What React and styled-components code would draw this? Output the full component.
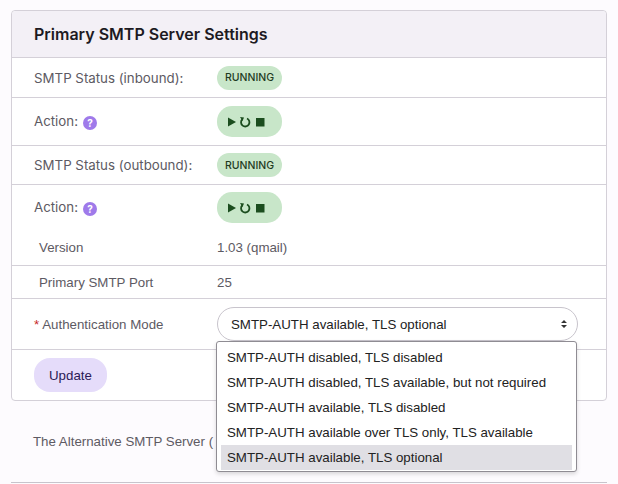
import React from "react";
import styled, { createGlobalStyle } from "styled-components";

const Global = createGlobalStyle`
  body { margin: 0; background: #fdfbfe; font-family: Inter, "Liberation Sans", sans-serif; }
`;
const Page = styled.div`padding: 10px 11px 0 11px; position: relative; height: 484px; box-sizing: border-box; overflow: hidden;`;
const Card = styled.div`border: 1px solid #d4d0d8; border-radius: 4px; background: #fff;`;
const Header = styled.div`background: #f3f0f6; height: 46px; display: flex; align-items: center; padding-left: 22px;
  font-size: 16px; font-weight: 600; color: #1d1a22; border-bottom: 1px solid #d4d0d8; border-radius: 4px 4px 0 0;`;
const Row = styled.div`display: grid; grid-template-columns: ${p => p.$lab || "183px"} 1fr; align-items: center;
  height: ${p => p.$h}px; padding-left: ${p => p.$pl || 22}px; border-bottom: ${p => p.$nb ? "none" : "1px solid #d4d0d8"};
  font-size: 13.3px; color: #5d5a63; font-family: ${p => p.$arial ? '"Liberation Sans", Arial, sans-serif' : 'Inter, sans-serif'};`;
const Badge = styled.span`display: inline-flex; align-items: center; justify-content: center; background: #c8e6c9; color: #1f3b1f;
  border-radius: 12px; height: 24px; padding: 0 8px; font-size: 10.5px; font-weight: 500; width: fit-content;`;
const Actions = styled.span`display: inline-flex; align-items: center; background: #c8e6c9; border-radius: 15px; height: 31px; padding: 0 9px 0 10px; width: fit-content;`;
const Help = styled.span`display: inline-flex; align-items: center; justify-content: center; width: 14px; height: 14px; border-radius: 50%;
  background: #9f7aea; color: #fff; font-size: 10px; font-weight: 700; margin-left: 5px; vertical-align: -1px;`;
const Star = styled.span`color: #c62828; margin-right: 3px;`;
const Select = styled.div`height: 34px; border: 1px solid #c8c4cc; border-radius: 17px; display: flex; align-items: center; justify-content: space-between;
  padding: 0 9px 0 13px; font-size: 13.3px; color: #222; margin-right: 28px; box-sizing: border-box;`;
const Footer = styled.div`height: 50px; display: flex; align-items: center; padding-left: 22px;`;
const Btn = styled.button`background: #e5dcfa; color: #2b1a56; border: none; border-radius: 16px; height: 34px; padding: 0 15px;
  font-family: "Liberation Sans", Arial, sans-serif; font-size: 13.3px;`;
const Alt = styled.div`padding: 33px 0 0 22px; font-size: 13.3px; color: #5d5a63; font-family: "Liberation Sans", Arial, sans-serif;`;
const Rule = styled.div`position: absolute; left: 11px; right: 11px; top: 482px; border-top: 1px solid #c8c4cc;`;
const Menu = styled.div`position: absolute; left: 216px; top: 341px; width: 361px; height: 131px; box-sizing: border-box; background: #fff;
  border: 1px solid #8f8c93; border-radius: 3px; box-shadow: 0 2px 4px rgba(0,0,0,.15); padding: 3px 4px; font-family: "Liberation Sans", Arial, sans-serif;`;
const Opt = styled.div`height: 25px; display: flex; align-items: center; padding-left: 6px; font-size: 13.3px; color: #222;
  background: ${p => p.$sel ? "#e0dfe4" : "transparent"};`;

const Icons = () => (
  <svg width="46" height="14" viewBox="0 0 46 14">
    <path d="M1 2.5 L9 7 L1 11.5 Z" fill="#1b4d1e" />
    <path d="M20 3.5 A4.2 4.2 0 1 1 15.2 4.4" fill="none" stroke="#1b4d1e" strokeWidth="1.8" />
    <path d="M13 2 L17 2.5 L15.5 6 Z" fill="#1b4d1e" />
    <rect x="29" y="3" width="8.5" height="8.5" fill="#1b4d1e" />
  </svg>
);

const Caret = () => (
  <svg width="8" height="10" viewBox="0 0 8 10"><path d="M1 4 L4 1 L7 4 Z M1 6 L4 9 L7 6 Z" fill="#333" /></svg>
);

export default function App() {
  const opts = ["SMTP-AUTH disabled, TLS disabled", "SMTP-AUTH disabled, TLS available, but not required", "SMTP-AUTH available, TLS disabled", "SMTP-AUTH available over TLS only, TLS available", "SMTP-AUTH available, TLS optional"];
  return (
    <Page>
      <Global />
      <Card>
        <Header>Primary SMTP Server Settings</Header>
        <Row $h={39}><span>SMTP Status (inbound):</span><Badge>RUNNING</Badge></Row>
        <Row $h={47}><span>Action:<Help>?</Help></span><Actions><Icons /></Actions></Row>
        <Row $h={38}><span>SMTP Status (outbound):</span><Badge>RUNNING</Badge></Row>
        <Row $h={45} $nb><span>Action:<Help>?</Help></span><Actions><Icons /></Actions></Row>
        <Row $h={35} $arial $pl={27} $lab="178px"><span>Version</span><span>1.03 (qmail)</span></Row>
        <Row $h={32} $arial $pl={27} $lab="178px"><span>Primary SMTP Port</span><span>25</span></Row>
        <Row $h={50} $arial $pl={22} $lab="183px"><span><Star>*</Star>Authentication Mode</span>
          <Select><span>SMTP-AUTH available, TLS optional</span><Caret /></Select></Row>
        <Footer><Btn>Update</Btn></Footer>
      </Card>
      <Alt>The Alternative SMTP Server (</Alt>
      <Rule />
      <Menu>{opts.map((o, i) => <Opt key={o} $sel={i === 4}>{o}</Opt>)}</Menu>
    </Page>
  );
}
